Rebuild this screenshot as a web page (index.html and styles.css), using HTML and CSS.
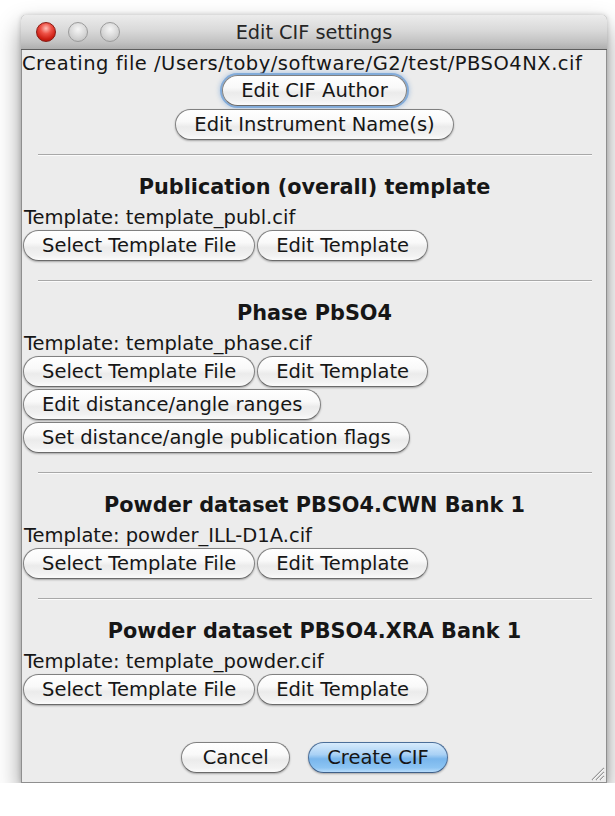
FILE: index.html
```html
<!DOCTYPE html>
<html>
<head>
<meta charset="utf-8">
<title>Edit CIF settings</title>
<link rel="stylesheet" href="styles.css">
</head>
<body>
<div class="window">
  <div class="titlebar">
    <div class="lights">
      <span class="light red"></span>
      <span class="light"></span>
      <span class="light"></span>
    </div>
    <div class="title">Edit CIF settings</div>
    <div></div>
  </div>
  <div class="content">
    <div class="line first">Creating file /Users/toby/software/G2/test/PBSO4NX.cif</div>
    <div class="top-btns">
      <button class="btn focus">Edit CIF Author</button>
      <button class="btn">Edit Instrument Name(s)</button>
    </div>

    <section class="sec first-sec">
      <div class="sep"></div>
      <h2 class="heading">Publication (overall) template</h2>
      <div class="line tpl">Template: template_publ.cif</div>
      <div class="rows">
        <div class="row"><button class="btn">Select Template File</button><button class="btn">Edit Template</button></div>
      </div>
    </section>

    <section class="sec">
      <div class="sep"></div>
      <h2 class="heading">Phase PbSO4</h2>
      <div class="line tpl">Template: template_phase.cif</div>
      <div class="rows">
        <div class="row"><button class="btn">Select Template File</button><button class="btn">Edit Template</button></div>
        <div class="row"><button class="btn">Edit distance/angle ranges</button></div>
        <div class="row"><button class="btn">Set distance/angle publication flags</button></div>
      </div>
    </section>

    <section class="sec">
      <div class="sep"></div>
      <h2 class="heading">Powder dataset PBSO4.CWN Bank 1</h2>
      <div class="line tpl">Template: powder_ILL-D1A.cif</div>
      <div class="rows">
        <div class="row"><button class="btn">Select Template File</button><button class="btn">Edit Template</button></div>
      </div>
    </section>

    <section class="sec">
      <div class="sep"></div>
      <h2 class="heading">Powder dataset PBSO4.XRA Bank 1</h2>
      <div class="line tpl">Template: template_powder.cif</div>
      <div class="rows">
        <div class="row"><button class="btn">Select Template File</button><button class="btn">Edit Template</button></div>
      </div>
    </section>

    <div class="dialog-btns">
      <button class="btn wide">Cancel</button>
      <button class="btn default">Create CIF</button>
    </div>
  </div>
  <svg class="grip" width="16" height="16" viewBox="0 0 16 16">
    <path d="M15 3 L3 15 M15 7 L7 15 M15 11 L11 15" stroke="#9a9a9a" stroke-width="1.2" fill="none"/>
    <path d="M15 4 L4 15 M15 8 L8 15 M15 12 L12 15" stroke="#ffffff" stroke-width="0.8" fill="none"/>
  </svg>
</div>
</body>
</html>
```

FILE: styles.css
```css
html, body {
  margin: 0;
  padding: 0;
  background: #ffffff;
}

body {
  font-family: "DejaVu Sans", "Liberation Sans", sans-serif;
  color: #161616;
}

.window {
  position: relative;
  margin: 15px 0 0 21px;
  width: 586px;
  height: 768px;
  box-sizing: border-box;
  background: #ececec;
  border: 1px solid #8f8f8f;
  border-top: none;
  border-radius: 5px 5px 0 0;
  box-shadow: 0 12px 24px rgba(0, 0, 0, 0.42), 0 0 5px rgba(0, 0, 0, 0.2);
  display: flex;
  flex-direction: column;
}

.titlebar {
  height: 34px;
  margin: 0 -1px;
  border-bottom: 1px solid #5e5e5e;
  border-radius: 5px 5px 0 0;
  background: linear-gradient(#ececec 0%, #d9d9d9 45%, #c2c2c2 80%, #aeaeae 100%);
  display: grid;
  grid-template-columns: 1fr auto 1fr;
  align-items: center;
}

.lights {
  display: flex;
  gap: 12px;
  padding-left: 15px;
}

.light {
  width: 18px;
  height: 18px;
  border-radius: 50%;
  border: 1px solid #9b9b9b;
  background: radial-gradient(circle at 50% 35%, #f6f6f6 0%, #d6d6d6 55%, #b9b9b9 100%);
}

.light.red {
  border-color: #8a1b14;
  background: radial-gradient(circle at 50% 30%, #ffc0b8 0%, #ee5146 35%, #cc1d12 70%, #951109 100%);
}

.title {
  font-size: 19.3px;
  color: #262626;
  white-space: nowrap;
}

.content {
  display: flex;
  flex-direction: column;
  padding: 0 0 0 1px;
}

.line {
  font-size: 19.5px;
  line-height: 24px;
  white-space: nowrap;
}

.line.first {
  padding-top: 2px;
  margin-left: -1px;
  letter-spacing: 0.5px;
}

.top-btns {
  display: flex;
  flex-direction: column;
  align-items: center;
  gap: 3px;
  margin-top: -1px;
}

.btn {
  height: 31px;
  box-sizing: border-box;
  padding: 0 18px;
  border: 1px solid #808080;
  border-bottom-color: #6a6a6a;
  border-radius: 16px;
  background: linear-gradient(#ffffff 0%, #f9f9f9 40%, #ebebeb 58%, #f2f2f2 85%, #fbfbfb 100%);
  box-shadow: 0 1px 2px rgba(0, 0, 0, 0.3);
  font-family: "DejaVu Sans", "Liberation Sans", sans-serif;
  font-size: 19.5px;
  color: #161616;
  white-space: nowrap;
  margin: 0;
}

.btn.focus {
  box-shadow: 0 0 0 2px rgba(120, 165, 215, 0.85), 0 0 4px 3px rgba(120, 165, 215, 0.45);
}

.btn.default {
  border-color: #4c6f99;
  border-bottom-color: #3e5f88;
  background: linear-gradient(#d7ebfc 0%, #a9d1f5 40%, #79b6ec 55%, #8cc4f3 85%, #b7dcfb 100%);
}

.btn.wide {
  min-width: 109px;
}

.sec {
  display: flex;
  flex-direction: column;
  margin-top: 19px;
}

.sec.first-sec {
  margin-top: 14px;
}

.sep {
  height: 0;
  margin: 0 14px 0 15px;
  border-top: 1px solid #a8a8a8;
  border-bottom: 1px solid #fbfbfb;
}

.heading {
  margin: 18px 0 0;
  font-size: 20.8px;
  font-weight: bold;
  line-height: 26px;
  text-align: center;
  white-space: nowrap;
}

.line.tpl {
  margin-top: 6px;
  margin-left: 1px;
}

.rows {
  display: flex;
  flex-direction: column;
  gap: 2px;
}

.row {
  display: flex;
  gap: 2px;
}

.dialog-btns {
  display: flex;
  justify-content: center;
  gap: 18px;
  margin-top: 37px;
}

.grip {
  position: absolute;
  right: 1px;
  bottom: 1px;
}
```
